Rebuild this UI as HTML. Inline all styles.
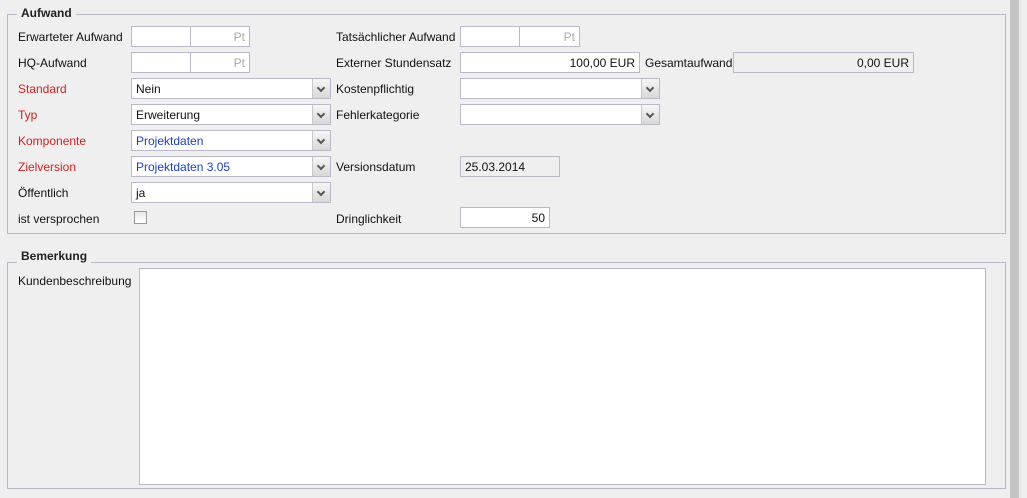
<!DOCTYPE html>
<html><head><style>
*{box-sizing:border-box;margin:0;padding:0}
body{width:1027px;height:498px;background:#efefef;font-family:"Liberation Sans",sans-serif;font-size:12px;color:#111;position:relative;overflow:hidden}
.a{position:absolute}
.fs{position:absolute;border:1px solid #b8b8c8}
.lg{position:absolute;background:#efefef;font-weight:bold;padding:0 4px;color:#222}
.l{position:absolute;line-height:14px;margin-top:1px}
.r{color:#d42020}
.in{position:absolute;background:#fff;border:1px solid #b9b9c9;height:21px;line-height:21px;padding:0 4px}
.g{background:#efefef}
.rt{text-align:right}
.pt{color:#aaa;text-align:right}
.sel{position:absolute;background:#fff;border:1px solid #b9b9c9;height:21px;line-height:21px;padding-left:4px}
.sel .ar{position:absolute;right:0;top:0;width:18px;height:19px;border-left:1px solid #c8c8c8;background:linear-gradient(#f6f6f6,#d8d8d8)}
.sel .ar:after{content:"";position:absolute;left:5px;top:6px;width:4px;height:4px;border-right:2px solid #555;border-bottom:2px solid #555;transform:rotate(45deg)}
.blue{color:#1a3fcf}
</style></head><body>
<div class="fs" style="left:7px;top:14px;width:999px;height:220px"></div>
<div class="lg" style="left:17px;top:6px">Aufwand</div>
<div class="fs" style="left:7px;top:262px;width:999px;height:227px"></div>
<div class="lg" style="left:17px;top:249px">Bemerkung</div>
<div class="a" style="left:1010px;top:0;width:9px;height:498px;background:#c4c4c4"></div>
<div class="a" style="left:1020px;top:0;width:1px;height:498px;background:#e4e4e4"></div>

<div class="l" style="left:18px;top:29px">Erwarteter Aufwand</div>
<div class="in" style="left:131px;top:26px;width:60px"></div>
<div class="in pt" style="left:190px;top:26px;width:60px">Pt</div>
<div class="l" style="left:336px;top:29px">Tatsächlicher Aufwand</div>
<div class="in" style="left:460px;top:26px;width:60px"></div>
<div class="in pt" style="left:519px;top:26px;width:61px">Pt</div>

<div class="l" style="left:18px;top:55px">HQ-Aufwand</div>
<div class="in" style="left:131px;top:52px;width:60px"></div>
<div class="in pt" style="left:190px;top:52px;width:60px">Pt</div>
<div class="l" style="left:336px;top:55px">Externer Stundensatz</div>
<div class="in rt" style="left:460px;top:52px;width:180px">100,00 EUR</div>
<div class="l" style="left:645px;top:55px">Gesamtaufwand</div>
<div class="in rt g" style="left:733px;top:52px;width:181px">0,00 EUR</div>

<div class="l r" style="left:18px;top:81px">Standard</div>
<div class="sel" style="left:131px;top:78px;width:200px">Nein<div class="ar"></div></div>
<div class="l" style="left:336px;top:81px">Kostenpflichtig</div>
<div class="sel" style="left:460px;top:78px;width:200px"><div class="ar"></div></div>

<div class="l r" style="left:18px;top:107px">Typ</div>
<div class="sel" style="left:131px;top:104px;width:200px">Erweiterung<div class="ar"></div></div>
<div class="l" style="left:336px;top:107px">Fehlerkategorie</div>
<div class="sel" style="left:460px;top:104px;width:200px"><div class="ar"></div></div>

<div class="l r" style="left:18px;top:133px">Komponente</div>
<div class="sel blue" style="left:131px;top:130px;width:200px">Projektdaten<div class="ar"></div></div>

<div class="l r" style="left:18px;top:159px">Zielversion</div>
<div class="sel blue" style="left:131px;top:156px;width:200px">Projektdaten 3.05<div class="ar"></div></div>
<div class="l" style="left:336px;top:159px">Versionsdatum</div>
<div class="in g" style="left:460px;top:156px;width:100px">25.03.2014</div>

<div class="l" style="left:18px;top:185px">Öffentlich</div>
<div class="sel" style="left:131px;top:182px;width:200px">ja<div class="ar"></div></div>

<div class="l" style="left:18px;top:211px">ist versprochen</div>
<div class="a" style="left:134px;top:211px;width:13px;height:13px;border:1px solid #999;background:linear-gradient(#e8e8e8,#fff)"></div>
<div class="l" style="left:336px;top:211px">Dringlichkeit</div>
<div class="in rt" style="left:460px;top:207px;width:90px">50</div>

<div class="l" style="left:18px;top:273px">Kundenbeschreibung</div>
<div class="a" style="left:139px;top:268px;width:847px;height:217px;background:#fff;border:1px solid #b9b9c9"></div>
</body></html>
